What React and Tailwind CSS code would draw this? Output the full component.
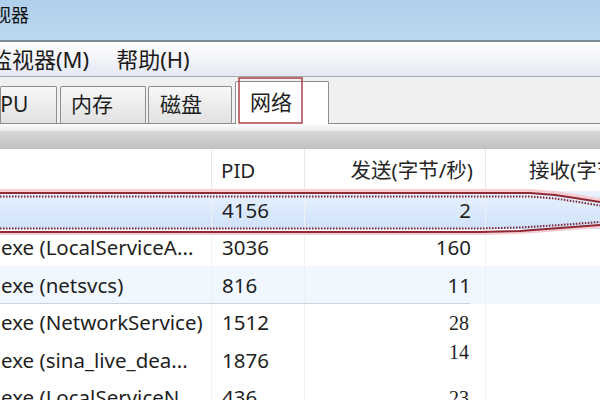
const latin = { fontFamily: '"Segoe UI", "Noto Sans", "Noto Sans CJK SC", sans-serif' }

const rows = [
  { name: '', pid: '4156', sent: '2', selected: true },
  { name: 'exe (LocalServiceA...', pid: '3036', sent: '160' },
  { name: 'exe (netsvcs)', pid: '816', sent: '11', hover: true },
  { name: 'exe (NetworkService)', pid: '1512', sent: '28', serif: true },
  { name: 'exe (sina_live_dea...', pid: '1876', sent: '14', serif: true, lift: true },
  { name: 'exe (LocalServiceN...', pid: '436', sent: '23', serif: true },
]

const Tab = ({ label, className = '', textClass = '' }) => (
  <div
    className={`h-[37px] border border-b-0 border-[#8d8d8d] rounded-t-[2px] bg-gradient-to-b from-[#f7f7f7] to-[#e2e2e2] overflow-hidden flex items-center whitespace-nowrap text-[21px] text-[#1e1e1e] ${className}`}
  >
    <span className={textClass}>{label}</span>
  </div>
)

const Row = ({ row }) => {
  let bg = 'bg-white'
  if (row.selected) bg = 'bg-gradient-to-b from-[#e9f2fd] to-[#cfe2fb]'
  if (row.hover) bg = 'bg-[#f1f7fe]'
  return (
    <div className={`relative grid grid-cols-[212px_93px_181px_1fr] h-[37.5px] text-[20.5px] text-[#1f1f1f] ${bg}`}>
      <div className="flex items-center pl-[1px] pt-[1px] whitespace-nowrap overflow-hidden border-r border-[#eef0f3]">
        {row.name}
      </div>
      <div className="flex items-center pl-[10px] pt-[1px] border-r border-[#eef0f3]">{row.pid}</div>
      <div className="flex items-center justify-end pr-[14px] pt-[1px] border-r border-[#eef0f3]">
        {row.serif ? (
          <span
            className={`bg-white px-[2px] leading-none text-[20px] ${row.lift ? 'mb-[16px]' : ''}`}
            style={{ fontFamily: '"Liberation Serif", serif' }}
          >
            {row.sent}
          </span>
        ) : (
          row.sent
        )}
      </div>
      <div></div>
      {row.hover && <div className="absolute left-0 bottom-0 w-[470px] h-[1px] bg-[#c5d3e3]"></div>}
    </div>
  )
}

export default function App() {
  return (
    <div className="relative w-[600px] h-[400px] overflow-hidden bg-white" style={latin}>
      {/* title bar */}
      <div className="h-[40px] bg-gradient-to-b from-[#b0cfeb] to-[#bcd8f0] overflow-hidden whitespace-nowrap">
        <span className="block ml-[-25px] pt-[2px] text-[18px] text-[#111]">监视器</span>
      </div>
      <div className="h-[2px] bg-[#7d8a98]"></div>

      {/* menu */}
      <div className="h-[35px] bg-gradient-to-b from-[#fdfdfe] via-[#f3f4f9] to-[#e4e7f4] border-b border-[#a5a9ae] flex items-center whitespace-nowrap text-[22px] text-[#1a1a1a]">
        <span className="ml-[-10px]">监视器(M)</span>
        <span className="ml-[27px]">帮助(H)</span>
      </div>

      {/* tabs */}
      <div className="h-[47px] bg-[#f0f0f0] border-b border-[#8d8d8d] flex items-end">
        <Tab label="CPU" className="w-[57px]" textClass="ml-[-14px]" />
        <Tab label="内存" className="w-[86px] ml-[3px]" textClass="pl-[10px]" />
        <Tab label="磁盘" className="w-[84px] ml-[2px]" textClass="pl-[11px]" />
        <div className="w-[94px] ml-[3px] h-[43px] mb-[-1px] bg-white border border-b-0 border-[#8d8d8d] rounded-t-[2px] flex items-center text-[21px] text-[#1e1e1e]">
          <span className="pl-[14px]">网络</span>
        </div>
      </div>
      <div className="h-[7px] bg-gradient-to-b from-[#fbfbfb] to-[#ececec]"></div>
      <div className="h-[18px] bg-gradient-to-b from-[#d9d9d9] to-[#bfbfbf]"></div>

      {/* header */}
      <div className="grid grid-cols-[212px_93px_181px_1fr] h-[42px] bg-white text-[20.5px] text-[#262626]">
        <div className="border-r border-[#e6e6e6]"></div>
        <div className="flex items-center pl-[9px] border-r border-[#e6e6e6]">PID</div>
        <div className="flex items-center justify-end pr-[12px] border-r border-[#e6e6e6]">发送(字节/秒)</div>
        <div className="flex items-center pl-[43px] whitespace-nowrap overflow-hidden">接收(字节/秒)</div>
      </div>

      {rows.map((row, i) => (
        <Row key={i} row={row} />
      ))}

      {/* hand-drawn red marks */}
      <svg className="absolute left-0 top-0 pointer-events-none" width="600" height="400">
        <rect x="239" y="78" width="63" height="45" fill="none" stroke="#b0404a" strokeWidth="1.5" />
        <polyline points="0,191 530,191 555,193 575,196 600,200" fill="none" stroke="#f6cdd2" strokeWidth="4" />
        <polyline points="0,233 480,233 520,232 560,229 600,226" fill="none" stroke="#f6cdd2" strokeWidth="4" />
        <polyline points="0,193 530,193 555,195 575,198 600,202" fill="none" stroke="#8e2a35" strokeWidth="2" />
        <polyline points="0,196.5 530,196.5 555,198.5 575,201.5 600,205.5" fill="none" stroke="#7a2530" strokeWidth="2" strokeDasharray="1.5 1.5" />
        <polyline points="0,228.5 480,228.5 520,227.5 560,225 600,222" fill="none" stroke="#7a2530" strokeWidth="2" strokeDasharray="1.5 1.5" />
        <polyline points="0,232 480,232 520,231 560,228 600,225" fill="none" stroke="#8e2a35" strokeWidth="2" />
      </svg>
    </div>
  )
}
